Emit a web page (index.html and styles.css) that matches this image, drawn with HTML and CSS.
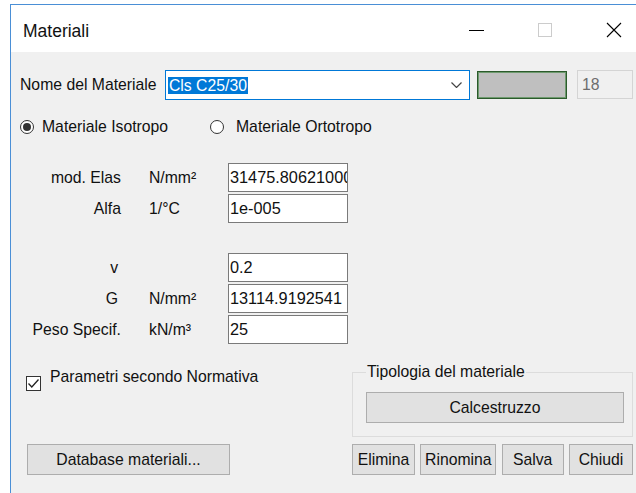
FILE: index.html
```html
<!DOCTYPE html>
<html lang="it">
<head>
<meta charset="utf-8">
<title>Materiali</title>
<link rel="stylesheet" href="styles.css">
</head>
<body>
<div class="window">
  <div class="titlebar">
    <span class="title">Materiali</span>
    <div class="caption">
      <svg class="cap-icon" width="16" height="16" viewBox="0 0 16 16"><line x1="1" y1="8.5" x2="16" y2="8.5" stroke="#000" stroke-width="1"/></svg>
      <svg class="cap-icon" width="16" height="16" viewBox="0 0 16 16"><rect x="1.5" y="1.5" width="13" height="13" fill="none" stroke="#cccccc" stroke-width="1"/></svg>
      <svg class="cap-icon" width="16" height="16" viewBox="0 0 16 16"><path d="M1 1 L15 15 M15 1 L1 15" stroke="#000" stroke-width="1.1" fill="none"/></svg>
    </div>
  </div>

  <div class="client">
    <div class="name-row">
      <span class="name-label">Nome del Materiale</span>
      <div class="combo">
        <span class="combo-sel">Cls C25/30</span>
        <svg class="combo-arrow" width="11" height="6" viewBox="0 0 11 6"><polyline points="0.5,0.5 5.5,5.5 10.5,0.5" fill="none" stroke="#444" stroke-width="1.2"/></svg>
      </div>
      <div class="swatch"></div>
      <div class="index">18</div>
    </div>

    <div class="radio-row">
      <div class="radio radio-iso"><span class="radio-dot on"></span><span>Materiale Isotropo</span></div>
      <div class="radio radio-orto"><span class="radio-dot"></span><span>Materiale Ortotropo</span></div>
    </div>

    <div class="props">
      <span class="plabel">mod. Elas</span><span class="unit">N/mm²</span><div class="field">31475.80621000</div>
      <span class="plabel">Alfa</span><span class="unit">1/°C</span><div class="field">1e-005</div>
      <div class="spacer"></div>
      <span class="plabel narrow">v</span><span class="unit"></span><div class="field">0.2</div>
      <span class="plabel narrow">G</span><span class="unit">N/mm²</span><div class="field">13114.9192541</div>
      <span class="plabel">Peso Specif.</span><span class="unit">kN/m³</span><div class="field">25</div>
    </div>

    <div class="bottom">
      <div class="left-col">
        <div class="check-row">
          <span class="check-box"><svg width="13" height="13" viewBox="0 0 13 13"><polyline points="1.5,6.5 4.8,10 11.5,2.5" fill="none" stroke="#222" stroke-width="1.3"/></svg></span>
          <span>Parametri secondo Normativa</span>
        </div>
        <button class="btn btn-db">Database materiali...</button>
      </div>
      <div class="right-col">
        <div class="group">
          <span class="group-title">Tipologia del materiale</span>
          <button class="btn btn-type">Calcestruzzo</button>
        </div>
        <div class="actions">
          <button class="btn btn-del">Elimina</button>
          <button class="btn btn-ren">Rinomina</button>
          <button class="btn btn-save">Salva</button>
          <button class="btn btn-close">Chiudi</button>
        </div>
      </div>
    </div>
  </div>
</div>
</body>
</html>
```

FILE: styles.css
```css
* { box-sizing: border-box; }

html, body {
  margin: 0;
  padding: 0;
}

body {
  width: 636px;
  height: 493px;
  overflow: hidden;
  background: #ffffff;
  font-family: "Liberation Sans", Arial, sans-serif;
  font-size: 15.75px;
  color: #111;
}

/* dialog frame */
.window {
  margin: 4px 0 0 10px;
  width: 626px;
  height: 489px;
  border-top: 1px solid #4a8fd6;
  border-left: 1px solid #4a8fd6;
  display: flex;
  flex-direction: column;
  overflow: hidden;
}

.titlebar {
  height: 47px;
  flex: none;
  background: #fff;
  display: flex;
  align-items: center;
  padding: 3px 14px 0 12px;
}

.title {
  font-size: 17.5px;
  margin-top: 3px;
}

.caption {
  margin-left: auto;
  display: flex;
  align-items: center;
  gap: 53px;
}

.cap-icon { display: block; }

/* client area */
.client {
  flex: 1;
  background: #f0f0f0;
  padding: 18px 0 0 9px;
}

.name-row {
  display: flex;
  align-items: center;
  height: 30px;
}

.name-label { width: 145px; }

.combo {
  width: 305px;
  height: 30px;
  border: 1px solid #0078d7;
  background: #fff;
  display: flex;
  align-items: center;
  padding: 0 7px 0 2px;
}

.combo-sel {
  background: #0078d7;
  color: #fff;
  padding: 0 1px;
  height: 17px;
  line-height: 17px;
}

.combo-arrow { margin-left: auto; display: block; }

.swatch {
  width: 90px;
  height: 28px;
  margin-left: 7px;
  background: #bfbfbf;
  border: 1px solid #2b5a2b;
  box-shadow: inset 0 0 0 1px #6e9a6e;
}

.index {
  width: 56px;
  height: 29px;
  margin-left: 10px;
  align-self: flex-start;
  border: 1px solid #d4d4d4;
  color: #6d6d6d;
  padding-left: 4px;
  display: flex;
  align-items: center;
}

/* material kind radios */
.radio-row {
  display: flex;
  align-items: center;
  height: 20px;
  margin-top: 17px;
}

.radio {
  display: flex;
  align-items: center;
  gap: 8px;
}

.radio-iso { width: 190px; }
.radio-orto { gap: 12px; }

.radio-dot {
  width: 14px;
  height: 14px;
  border-radius: 50%;
  border: 1px solid #333;
  background: #fff;
  display: flex;
  align-items: center;
  justify-content: center;
}

.radio-dot.on::after {
  content: "";
  width: 8px;
  height: 8px;
  border-radius: 50%;
  background: #333;
}

/* property grid */
.props {
  display: grid;
  grid-template-columns: 101px 28px 79px 120px;
  row-gap: 2px;
  align-items: center;
  margin-top: 26px;
}

.plabel { grid-column: 1; text-align: right; }
.plabel.narrow { padding-right: 3px; }
.unit { grid-column: 3; }

.field {
  grid-column: 4;
  height: 29px;
  border: 1px solid #7a7a7a;
  background: #fff;
  padding: 0 2px 0 1px;
  font-size: 16.3px;
  white-space: nowrap;
  overflow: hidden;
  display: flex;
  align-items: center;
}

.spacer {
  grid-column: 1 / -1;
  height: 26px;
}

/* lower section */
.bottom {
  display: flex;
  height: 107px;
  margin-top: 24px;
}

.left-col {
  width: 332px;
  padding-left: 6px;
  display: flex;
  flex-direction: column;
  justify-content: space-between;
  align-items: flex-start;
}

.check-row {
  display: flex;
  align-items: flex-start;
  gap: 9px;
  line-height: 18px;
}

.check-box {
  width: 15px;
  height: 15px;
  margin-top: 8px;
  border: 1px solid #333;
  background: #fff;
  display: flex;
  align-items: center;
  justify-content: center;
}

.check-box svg { display: block; }

.right-col {
  width: 281px;
  padding-top: 4px;
  display: flex;
  flex-direction: column;
}

.group {
  height: 65px;
  border: 1px solid #dcdcdc;
  padding: 0 8px 0 13px;
  display: flex;
  flex-direction: column;
}

.group-title {
  align-self: flex-start;
  margin-top: -10px;
  padding: 0 1px;
  line-height: 18px;
  background: #f0f0f0;
}

.btn {
  font: inherit;
  color: #111;
  background: #e1e1e1;
  border: 1px solid #adadad;
  height: 31px;
  padding: 0;
  margin: 0;
}

.btn-db { width: 203px; margin-left: 1px; }

.btn-type {
  margin-top: 11px;
  height: 31px;
  width: 100%;
}

.actions {
  margin-top: 7px;
  display: flex;
  justify-content: space-between;
}

.btn-del { width: 63px; }
.btn-ren { width: 76px; }
.btn-save { width: 62px; }
.btn-close { width: 64px; }
```
